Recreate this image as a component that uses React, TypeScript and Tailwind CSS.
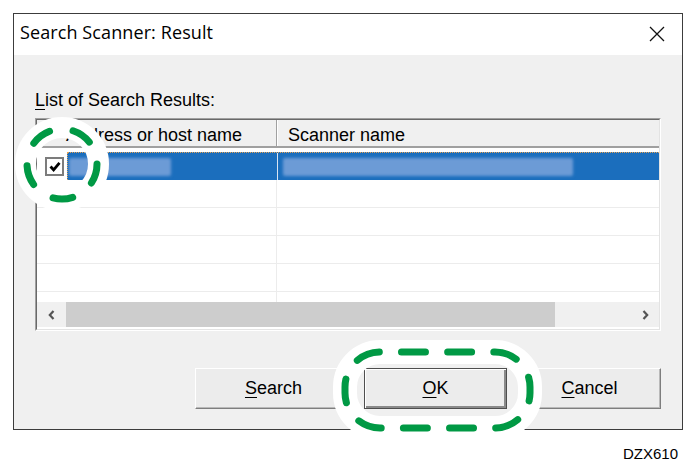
import React from "react";

const GREEN = "#009944";

function Check() {
  return (
    <span className="flex h-[19px] w-[19px] items-center justify-center border-2 border-[#7c7c7c] bg-white">
      <svg width="12" height="11" viewBox="0 0 12 11">
        <path d="M1.5 5.5 L4.6 8.8 L10.5 1.8" fill="none" stroke="#000" strokeWidth="2.8" strokeLinejoin="miter" />
      </svg>
    </span>
  );
}

function Chevron({ dir }: { dir: "left" | "right" }) {
  return (
    <svg width="7" height="10" viewBox="0 0 7 10">
      <path
        d={dir === "left" ? "M5.5 1 L1.8 5 L5.5 9" : "M1.5 1 L5.2 5 L1.5 9"}
        fill="none"
        stroke="#555"
        strokeWidth="2.2"
      />
    </svg>
  );
}

function Mnemonic({ first, rest }: { first: string; rest: string }) {
  return (
    <span>
      <span className="underline underline-offset-[3px]">{first}</span>
      {rest}
    </span>
  );
}

export default function App() {
  return (
    <div className="relative flex h-[473px] w-[691px] flex-col overflow-hidden bg-white pl-[13px] pt-[13px] font-['Liberation_Sans',Arial,sans-serif] text-black">
      {/* Dialog */}
      <div className="flex h-[417px] w-[670px] flex-col border border-[#3c3c3c]">
        <div className="flex h-[41px] items-center justify-between bg-white pl-[6px] pr-[17px]">
          <span className="mb-[4px] font-['Open_Sans',sans-serif] text-[18px] tracking-[0.1px]">
            Search Scanner: Result
          </span>
          <svg width="16" height="16" viewBox="0 0 16 16" className="mb-[2px]">
            <path d="M1 1 L15 15 M15 1 L1 15" stroke="#111" strokeWidth="1.3" />
          </svg>
        </div>

        <div className="flex flex-1 flex-col bg-[#f0f0f0] px-[21px] pt-[35px]">
          <div className="mb-[8px] h-[20px] text-[18px] leading-[20px]">
            <Mnemonic first="L" rest="ist of Search Results:" />
          </div>

          {/* List view */}
          <div className="h-[213px] border-b border-l border-r border-t border-b-white border-l-[#a0a0a0] border-r-white border-t-[#a0a0a0]">
            <div className="flex h-full flex-col border-b border-l border-r border-t border-b-[#e3e3e3] border-l-[#696969] border-r-[#e3e3e3] border-t-[#696969] bg-white">
              {/* Header */}
              <div className="flex h-[28px] border-b-2 border-[#a0a0a0] bg-[#f0f0f0] text-[18px] leading-[26px]">
                <div className="w-[240px] border-r border-[#a0a0a0] pl-[29px] pt-[2px]">Address or host name</div>
                <div className="flex-1 border-l border-white pl-[10px] pt-[2px]">Scanner name</div>
              </div>
              <div className="h-[4px]" />

              {/* Selected row */}
              <div className="flex h-[28px]">
                <div className="flex w-[30px] items-center pl-[8px]">
                  <Check />
                </div>
                <div className="flex flex-1 border-l border-t border-dotted border-[#e3a458] bg-[#1b6ebd]">
                  <div className="flex w-[209px] items-center pl-[1px]">
                    <div className="h-[18px] w-[102px] rounded-[2px] bg-[#6c9bd6] blur-[1.5px]" />
                  </div>
                  <div className="w-px bg-[#d8e4f2]" />
                  <div className="flex flex-1 items-center pl-[5px]">
                    <div className="h-[18px] w-[290px] rounded-[2px] bg-[#6c9bd6] blur-[1.5px]" />
                  </div>
                </div>
              </div>

              {[0, 1, 2, 3].map((i) => (
                <div key={i} className="flex h-[28px] border-b border-[#ececec]">
                  <div className="w-[240px] border-r border-[#ececec]" />
                  <div className="flex-1" />
                </div>
              ))}
              <div className="flex flex-1">
                <div className="w-[240px] border-r border-[#ececec]" />
              </div>

              {/* Horizontal scrollbar */}
              <div className="mb-[2px] flex h-[25px] bg-[#f0f0f0]">
                <div className="flex w-[29px] items-center justify-center">
                  <Chevron dir="left" />
                </div>
                <div className="w-[489px] bg-[#cdcdcd]" />
                <div className="flex-1" />
                <div className="flex w-[28px] items-center justify-center">
                  <Chevron dir="right" />
                </div>
              </div>
            </div>
          </div>

          {/* Buttons */}
          <div className="mt-[37px] flex justify-end gap-[11px] text-[18px]">
            <button className="mr-[1px] flex h-[41px] w-[157px] items-center justify-center border border-b-[#7e7e7e] border-l-white border-r-[#7e7e7e] border-t-white bg-[#ececec] shadow-[inset_-1px_-1px_0_#b9b9b9]">
              <Mnemonic first="S" rest="earch" />
            </button>
            <button className="flex h-[41px] w-[143px] items-center justify-center border border-[#4e4e4e] bg-[#ececec] shadow-[inset_1px_1px_0_#ffffff,inset_-2px_-2px_0_#8a8a8a]">
              <Mnemonic first="O" rest="K" />
            </button>
            <button className="flex h-[41px] w-[143px] items-center justify-center border border-b-[#7e7e7e] border-l-white border-r-[#7e7e7e] border-t-white bg-[#ececec] shadow-[inset_-1px_-1px_0_#b9b9b9]">
              <Mnemonic first="C" rest="ancel" />
            </button>
          </div>
        </div>
      </div>

      <div className="mt-[15px] pr-[13px] text-right text-[15px] leading-[17px]">DZX610</div>

      {/* Green dashed callouts, each on a white halo ring */}
      <svg className="pointer-events-none absolute left-0 top-0" width="691" height="473" viewBox="0 0 691 473">
        <circle cx="62" cy="164" r="36.5" fill="none" stroke="#fff" strokeWidth="21" />
        <circle
          cx="62"
          cy="164"
          r="35"
          fill="none"
          stroke={GREEN}
          strokeWidth="7"
          strokeLinecap="round"
          strokeDasharray="20 23.98"
        />
        <rect x="345" y="352" width="185" height="76" rx="35" fill="none" stroke="#fff" strokeWidth="24" />
        <rect
          x="345"
          y="352"
          width="185"
          height="76"
          rx="35"
          fill="none"
          stroke={GREEN}
          strokeWidth="7"
          strokeLinecap="round"
          pathLength="461.9"
          strokeDasharray="24 22.19"
          strokeDashoffset="24.69"
        />
      </svg>
    </div>
  );
}
